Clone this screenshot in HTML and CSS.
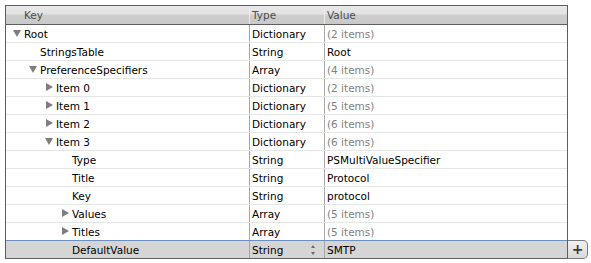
FILE: index.html
```html
<!DOCTYPE html>
<html lang="en">
<head>
    <meta charset="UTF-8">
    <title>Root.plist</title>
    <link rel="stylesheet" href="styles.css">
</head>
<body>
    <div class="editor">
        <div class="plist">
            <div class="row header">
                <div class="cell key">Key</div>
                <div class="cell type">Type</div>
                <div class="cell value">Value</div>
            </div>

            <div class="row level-0">
                <div class="cell key"><span class="toggle open"></span>Root</div>
                <div class="cell type">Dictionary</div>
                <div class="cell value muted">(2 items)</div>
            </div>
            <div class="row level-1">
                <div class="cell key"><span class="toggle"></span>StringsTable</div>
                <div class="cell type">String</div>
                <div class="cell value">Root</div>
            </div>
            <div class="row level-1">
                <div class="cell key"><span class="toggle open"></span>PreferenceSpecifiers</div>
                <div class="cell type">Array</div>
                <div class="cell value muted">(4 items)</div>
            </div>
            <div class="row level-2">
                <div class="cell key"><span class="toggle closed"></span>Item 0</div>
                <div class="cell type">Dictionary</div>
                <div class="cell value muted">(2 items)</div>
            </div>
            <div class="row level-2">
                <div class="cell key"><span class="toggle closed"></span>Item 1</div>
                <div class="cell type">Dictionary</div>
                <div class="cell value muted">(5 items)</div>
            </div>
            <div class="row level-2">
                <div class="cell key"><span class="toggle closed"></span>Item 2</div>
                <div class="cell type">Dictionary</div>
                <div class="cell value muted">(6 items)</div>
            </div>
            <div class="row level-2">
                <div class="cell key"><span class="toggle open"></span>Item 3</div>
                <div class="cell type">Dictionary</div>
                <div class="cell value muted">(6 items)</div>
            </div>
            <div class="row level-3">
                <div class="cell key"><span class="toggle"></span>Type</div>
                <div class="cell type">String</div>
                <div class="cell value">PSMultiValueSpecifier</div>
            </div>
            <div class="row level-3">
                <div class="cell key"><span class="toggle"></span>Title</div>
                <div class="cell type">String</div>
                <div class="cell value">Protocol</div>
            </div>
            <div class="row level-3">
                <div class="cell key"><span class="toggle"></span>Key</div>
                <div class="cell type">String</div>
                <div class="cell value">protocol</div>
            </div>
            <div class="row level-3">
                <div class="cell key"><span class="toggle closed"></span>Values</div>
                <div class="cell type">Array</div>
                <div class="cell value muted">(5 items)</div>
            </div>
            <div class="row level-3 before-selected">
                <div class="cell key"><span class="toggle closed"></span>Titles</div>
                <div class="cell type">Array</div>
                <div class="cell value muted">(5 items)</div>
            </div>
            <div class="row level-3 selected">
                <div class="cell key"><span class="toggle"></span>DefaultValue</div>
                <div class="cell type">String<span class="stepper"></span></div>
                <div class="cell value">SMTP</div>
            </div>
        </div>
        <button class="add-button" type="button">+</button>
    </div>
</body>
</html>
```

FILE: styles.css
```css
body {
    margin: 0;
    padding: 5px 0 0 5px;
    background: #ffffff;
    font-family: 'Lucida Grande', 'DejaVu Sans', sans-serif;
    font-size: 10.5px;
    color: #000000;
}

.editor {
    display: flex;
    align-items: flex-end;
}

.plist {
    width: 561px;
    border: 1px solid #5e5e5e;
    background: #ffffff;
}

.row {
    display: grid;
    grid-template-columns: 243px 75px 243px;
    height: 17px;
    border-bottom: 1px solid #e6e6e6;
}

.row:last-child { border-bottom: none; }

.cell {
    display: flex;
    align-items: center;
    white-space: nowrap;
    overflow: hidden;
}

.cell.type,
.cell.value {
    border-left: 1px solid #a8a8a8;
    padding-left: 2px;
}

.cell.value { padding-left: 2px; }

.muted { color: #7f7f7f; }

/* header */
.header {
    height: 18px;
    border-bottom: 1px solid #5e5e5e;
    background: linear-gradient(#e8e8e8 0, #e2e2e2 45%, #cdcdcd 50%, #c9c9c9 100%);
    color: #4c4c4c;
}
.header .cell.key { padding-left: 18px; }
.header .cell.type,
.header .cell.value { border-left-color: #ececec; }

/* tree indentation */
.cell.key { padding-left: 7px; }
.level-1 .cell.key { padding-left: 23px; }
.level-2 .cell.key { padding-left: 39px; }
.level-3 .cell.key { padding-left: 55px; }

.toggle {
    width: 11px;
    height: 7px;
    flex: none;
    position: relative;
}
.toggle.open::before {
    content: '';
    position: absolute;
    left: 0;
    top: 0;
    border-left: 4px solid transparent;
    border-right: 4px solid transparent;
    border-top: 7px solid #7d7d7d;
}
.toggle.closed::before {
    content: '';
    position: absolute;
    left: 1px;
    top: -1px;
    border-top: 4px solid transparent;
    border-bottom: 4px solid transparent;
    border-left: 7px solid #7d7d7d;
}

/* selected row */
.before-selected { border-bottom-color: #6d8ec0; }
.selected { background: #d5d5d5; }
.selected .cell.type { position: relative; }

.stepper {
    position: absolute;
    right: 8px;
    top: 4px;
    width: 5px;
    height: 10px;
}
.stepper::before,
.stepper::after {
    content: '';
    position: absolute;
    left: 0;
    border-left: 2.5px solid transparent;
    border-right: 2.5px solid transparent;
}
.stepper::before { top: 0; border-bottom: 3px solid #6a6a6a; }
.stepper::after { bottom: 0; border-top: 3px solid #6a6a6a; }

.add-button {
    width: 20px;
    height: 19px;
    margin: 0;
    padding: 0 0 1px 0;
    border: 1px solid #7a7a7a;
    border-left: none;
    border-radius: 0 5px 5px 0;
    background: linear-gradient(#f2f2f2, #d8d8d8);
    font-family: 'DejaVu Sans', sans-serif;
    font-size: 14px;
    font-weight: bold;
    line-height: 16px;
    color: #3c3c3c;
}
```
